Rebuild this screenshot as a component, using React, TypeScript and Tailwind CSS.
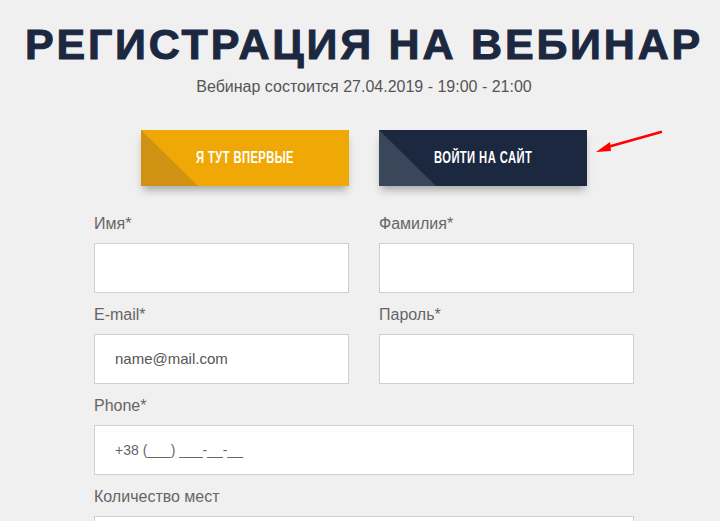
import React from 'react';

const Field: React.FC<{ label: string; placeholder?: string; small?: boolean }> = ({ label, placeholder, small }) => (
  <div className="flex flex-col">
    <label className="text-[16px] leading-[20px] text-[#666] mb-[9px]">{label}</label>
    <div className="h-[50px] bg-white border border-[#ccd1d9] flex items-center pl-[20px]">
      {placeholder && (
        <span className={small ? 'text-[14px] text-[#666]' : 'text-[15px] text-[#555]'}>{placeholder}</span>
      )}
    </div>
  </div>
);

const CornerButton: React.FC<{ text: string; bg: string; corner: string }> = ({ text, bg, corner }) => (
  <button
    className={`relative w-[208px] h-[56px] overflow-hidden flex items-center justify-center shadow-[0_6px_8px_-2px_rgba(0,0,0,0.3)] ${bg}`}
  >
    <span className={`absolute left-0 top-0 w-[57px] h-[56px] [clip-path:polygon(0_0,100%_100%,0_100%)] ${corner}`} />
    <span className="relative inline-block whitespace-nowrap text-white text-[16px] font-bold tracking-[0.6px] uppercase scale-x-[0.7]">
      {text}
    </span>
  </button>
);

export default function App() {
  return (
    <div className="min-h-screen bg-[#f0f0f0] font-['Liberation_Sans',Arial,sans-serif] pl-[8px]">
      <div className="pt-[20px] text-center">
        <h1 className="whitespace-nowrap text-[43px] leading-[48px] font-black text-[#1c2840] tracking-[2.8px] [-webkit-text-stroke:1px_#1c2840]">
          РЕГИСТРАЦИЯ НА ВЕБИНАР
        </h1>
        <p className="mt-[7px] text-[16px] leading-[24px] text-[#555]">Вебинар состоится 27.04.2019 - 19:00 - 21:00</p>
      </div>

      <div className="relative mt-[31px] flex justify-center gap-[30px]">
        <CornerButton text="Я тут впервые" bg="bg-[#f0a806]" corner="bg-[#d09212]" />
        <CornerButton text="Войти на сайт" bg="bg-[#1c2740]" corner="bg-[#3a4659]" />
        <svg className="absolute left-[582px] top-[-2px]" width="80" height="30" viewBox="0 0 80 30">
          <line x1="71" y1="4" x2="14" y2="20" stroke="#ff0000" strokeWidth="2.5" strokeLinecap="round" />
          <polygon points="6,24 20,14 21,23" fill="#ff0000" />
        </svg>
      </div>

      <div className="w-[540px] mx-auto mt-[28px] flex flex-col gap-[12px] pb-[20px]">
        <div className="grid grid-cols-2 gap-x-[30px]">
          <Field label="Имя*" />
          <Field label="Фамилия*" />
        </div>
        <div className="grid grid-cols-2 gap-x-[30px]">
          <Field label="E-mail*" placeholder="name@mail.com" />
          <Field label="Пароль*" />
        </div>
        <Field label="Phone*" placeholder="+38 (___) ___-__-__" small />
        <Field label="Количество мест" />
      </div>
    </div>
  );
}
